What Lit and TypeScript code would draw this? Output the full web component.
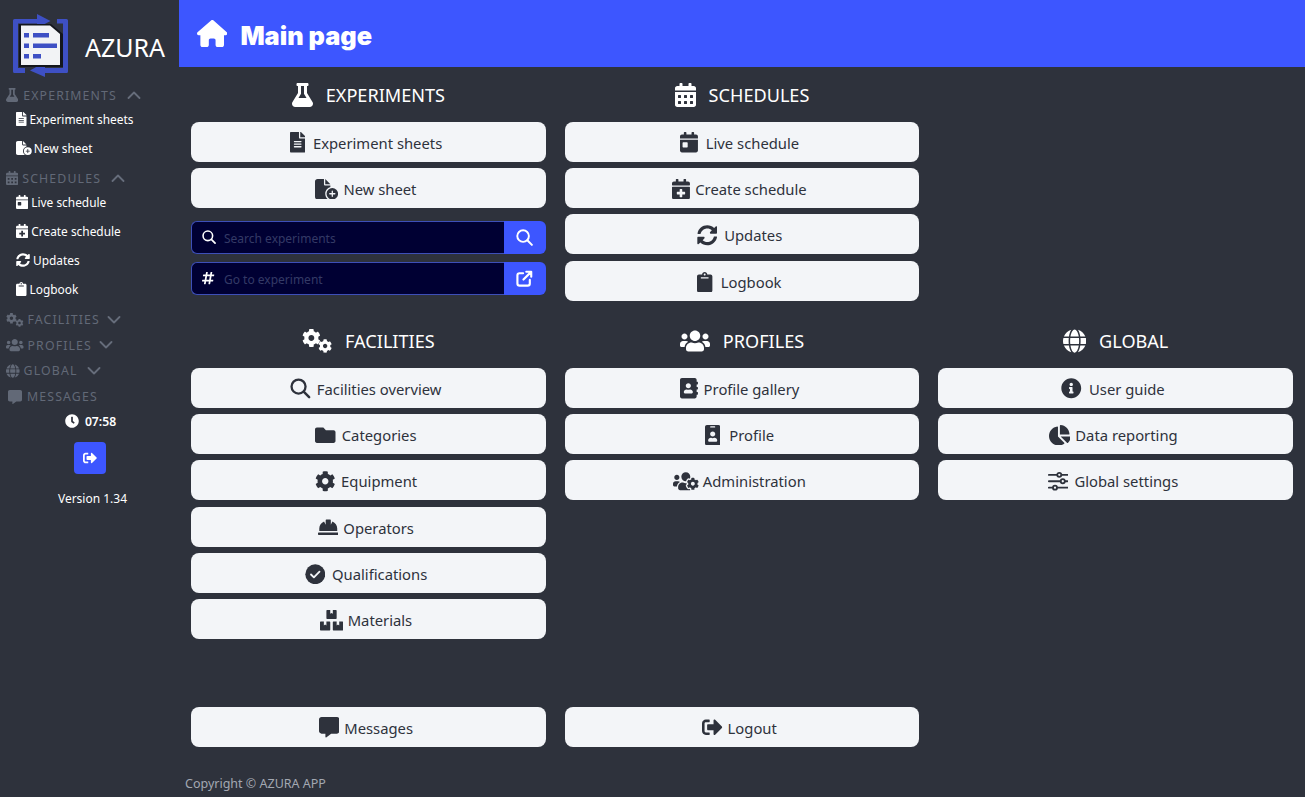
import { LitElement, html, css, svg } from "lit";
import { customElement } from "lit/decorators.js";

type Ic = { vb: string; body: any };
const P = (vb: string, d: string): Ic => ({ vb, body: svg`<path d=${d}/>` });
const cogD = "M487.4 315.7l-42.6-24.6c4.3-23.2 4.3-47 0-70.2l42.6-24.6c4.9-2.8 7.1-8.6 5.5-14-11.1-35.6-30-67.8-54.7-94.6-3.8-4.1-10-5.1-14.8-2.3L380.8 110c-17.9-15.4-38.5-27.3-60.8-35.1V25.8c0-5.6-3.9-10.5-9.4-11.7-36.7-8.2-74.3-7.8-109.2 0-5.5 1.2-9.4 6.1-9.4 11.7V75c-22.2 7.9-42.8 19.8-60.8 35.1L88.7 85.5c-4.9-2.8-11-1.9-14.8 2.3-24.7 26.7-43.6 58.9-54.7 94.6-1.7 5.4.6 11.2 5.5 14L67.3 221c-4.3 23.2-4.3 47 0 70.2l-42.6 24.6c-4.9 2.8-7.1 8.6-5.5 14 11.1 35.6 30 67.8 54.7 94.6 3.8 4.1 10 5.1 14.8 2.3l42.6-24.6c17.9 15.4 38.5 27.3 60.8 35.1v49.2c0 5.6 3.9 10.5 9.4 11.7 36.7 8.2 74.3 7.8 109.2 0 5.5-1.2 9.4-6.1 9.4-11.7v-49.2c22.2-7.9 42.8-19.8 60.8-35.1l42.6 24.6c4.9 2.8 11 1.9 14.8-2.3 24.7-26.7 43.6-58.9 54.7-94.6 1.5-5.5-.7-11.3-5.6-14.1zM256 336c-44.1 0-80-35.9-80-80s35.9-80 80-80 80 35.9 80 80-35.9 80-80 80z";
const icons: Record<string, Ic> = {
  home: P("0 0 576 512", "M575.8 255.5c0 18-15 32.1-32 32.1h-32l.7 160.2c0 2.7-.2 5.4-.5 8.1V472c0 22.1-17.9 40-40 40H456c-1.1 0-2.2 0-3.3-.1c-1.4 .1-2.8 .1-4.2 .1H416 392c-22.1 0-40-17.9-40-40V448 384c0-17.7-14.3-32-32-32H256c-17.7 0-32 14.3-32 32v64 24c0 22.1-17.9 40-40 40H160 128.1c-1.5 0-3-.1-4.5-.2c-1.2 .1-2.4 .2-3.6 .2H104c-22.1 0-40-17.9-40-40V360c0-.9 0-1.900 .1-2.800V287.600H32c-18 0-32-14-32-32.100c0-9 3-17 10-24L266.400 8c7-7 15-8 22-8s15 2 21 7L564.800 231.500c8 7 12 15 11 24z"),
  flask: P("0 0 448 512", "M437.2 403.5L320 215V64h8c13.3 0 24-10.7 24-24V24c0-13.3-10.7-24-24-24H120c-13.3 0-24 10.7-24 24v16c0 13.3 10.7 24 24 24h8v151L10.8 403.5C-18.5 450.6 15.3 512 70.9 512h306.2c55.7 0 89.4-61.5 60.1-108.5zM137.9 320l48.2-77.6c3.7-5.2 5.8-11.6 5.8-18.4V64h64v160c0 6.9 2.2 13.2 5.8 18.4l48.2 77.6h-172z"),
  file: P("0 0 384 512", "M224 136V0H24C10.7 0 0 10.7 0 24v464c0 13.3 10.7 24 24 24h336c13.3 0 24-10.7 24-24V160H248c-13.2 0-24-10.8-24-24zm64 236c0 6.6-5.4 12-12 12H108c-6.6 0-12-5.4-12-12v-8c0-6.6 5.4-12 12-12h168c6.6 0 12 5.4 12 12v8zm0-64c0 6.6-5.4 12-12 12H108c-6.6 0-12-5.4-12-12v-8c0-6.6 5.4-12 12-12h168c6.6 0 12 5.4 12 12v8zm0-72v8c0 6.6-5.4 12-12 12H108c-6.6 0-12-5.4-12-12v-8c0-6.6 5.4-12 12-12h168c6.6 0 12 5.4 12 12zm96-114.1v6.1H256V0h6.1c6.4 0 12.5 2.5 17 7l97.9 98c4.5 4.5 7 10.6 7 16.9z"),
  filePlus: P("0 0 576 512", "M0 64C0 28.7 28.7 0 64 0H224V128c0 17.7 14.3 32 32 32H384v38.6C310.1 219.5 256 287.4 256 368c0 59.1 29.1 111.3 73.8 143.3c-3.2 .5-6.4 .7-9.8 .7H64c-35.3 0-64-28.7-64-64V64zm384 64H256V0L384 128zm48 96a144 144 0 1 1 0 288 144 144 0 1 1 0-288zm16 80c0-8.8-7.2-16-16-16s-16 7.2-16 16v48H368c-8.8 0-16 7.2-16 16s7.2 16 16 16h48v48c0 8.8 7.2 16 16 16s16-7.2 16-16V384h48c8.8 0 16-7.2 16-16s-7.2-16-16-16H448V304z"),
  calendar: P("0 0 448 512", "M0 464c0 26.5 21.5 48 48 48h352c26.5 0 48-21.5 48-48V192H0v272zm320-196c0-6.6 5.4-12 12-12h40c6.6 0 12 5.4 12 12v40c0 6.6-5.4 12-12 12h-40c-6.6 0-12-5.4-12-12v-40zm0 128c0-6.6 5.4-12 12-12h40c6.6 0 12 5.4 12 12v40c0 6.6-5.4 12-12 12h-40c-6.6 0-12-5.4-12-12v-40zM192 268c0-6.6 5.4-12 12-12h40c6.6 0 12 5.4 12 12v40c0 6.6-5.4 12-12 12h-40c-6.6 0-12-5.4-12-12v-40zm0 128c0-6.6 5.4-12 12-12h40c6.6 0 12 5.4 12 12v40c0 6.6-5.4 12-12 12h-40c-6.6 0-12-5.4-12-12v-40zM64 268c0-6.6 5.4-12 12-12h40c6.6 0 12 5.4 12 12v40c0 6.6-5.4 12-12 12H76c-6.6 0-12-5.4-12-12v-40zm0 128c0-6.6 5.4-12 12-12h40c6.6 0 12 5.4 12 12v40c0 6.6-5.4 12-12 12H76c-6.6 0-12-5.4-12-12v-40zM400 64h-48V16c0-8.8-7.2-16-16-16h-32c-8.8 0-16 7.2-16 16v48H160V16c0-8.8-7.2-16-16-16h-32c-8.8 0-16 7.2-16 16v48H48C21.5 64 0 85.5 0 112v48h448v-48c0-26.5-21.5-48-48-48z"),
  calDay: P("0 0 448 512", "M0 464c0 26.5 21.5 48 48 48h352c26.5 0 48-21.5 48-48V192H0v272zm64-192c0-8.8 7.2-16 16-16h96c8.8 0 16 7.2 16 16v96c0 8.8-7.2 16-16 16H80c-8.8 0-16-7.2-16-16v-96zM400 64h-48V16c0-8.8-7.2-16-16-16h-32c-8.8 0-16 7.2-16 16v48H160V16c0-8.8-7.2-16-16-16h-32c-8.8 0-16 7.2-16 16v48H48C21.5 64 0 85.5 0 112v48h448v-48c0-26.5-21.5-48-48-48z"),
  calPlus: P("0 0 448 512", "M436 160H12c-6.6 0-12-5.4-12-12v-36c0-26.5 21.5-48 48-48h48V12c0-6.6 5.4-12 12-12h40c6.6 0 12 5.4 12 12v52h128V12c0-6.6 5.4-12 12-12h40c6.6 0 12 5.4 12 12v52h48c26.5 0 48 21.5 48 48v36c0 6.6-5.4 12-12 12zM12 192h424c6.6 0 12 5.4 12 12v260c0 26.5-21.5 48-48 48H48c-26.5 0-48-21.5-48-48V204c0-6.6 5.4-12 12-12zm316 140c0-6.6-5.4-12-12-12h-60v-60c0-6.6-5.4-12-12-12h-40c-6.6 0-12 5.4-12 12v60h-60c-6.6 0-12 5.4-12 12v40c0 6.6 5.4 12 12 12h60v60c0 6.6 5.4 12 12 12h40c6.6 0 12-5.4 12-12v-60h60c6.6 0 12-5.4 12-12v-40z"),
  sync: P("0 0 512 512", "M370.72 133.28C339.458 104.008 298.888 87.962 255.848 88c-77.458.068-144.328 53.178-162.791 126.85-1.344 5.363-6.122 9.15-11.651 9.15H24.103c-7.498 0-13.194-6.807-11.807-14.176C33.933 94.924 134.813 8 256 8c66.448 0 126.791 26.136 171.315 68.685L463.03 40.97C478.149 25.851 504 36.559 504 57.941V192c0 13.255-10.745 24-24 24H345.941c-21.382 0-32.09-25.851-16.971-40.971l41.75-41.749zM32 296h134.059c21.382 0 32.09 25.851 16.971 40.971l-41.75 41.75c31.262 29.273 71.835 45.319 114.876 45.28 77.418-.07 144.315-53.144 162.787-126.849 1.344-5.363 6.122-9.15 11.651-9.15h57.304c7.498 0 13.194 6.807 11.807 14.176C478.067 417.076 377.187 504 256 504c-66.448 0-126.791-26.136-171.315-68.685L48.97 471.03C33.851 486.149 8 475.441 8 454.059V320c0-13.255 10.745-24 24-24z"),
  clipboard: P("0 0 384 512", "M384 112v352c0 26.51-21.49 48-48 48H48c-26.51 0-48-21.49-48-48V112c0-26.51 21.49-48 48-48h80c0-35.29 28.71-64 64-64s64 28.71 64 64h80c26.51 0 48 21.49 48 48zM192 40c-13.255 0-24 10.745-24 24s10.745 24 24 24 24-10.745 24-24-10.745-24-24-24m96 114v-20a6 6 0 0 0-6-6H102a6 6 0 0 0-6 6v20a6 6 0 0 0 6 6h180a6 6 0 0 0 6-6z"),
  cog: P("0 0 512 512", cogD),
  cogs: { vb: "0 0 640 512", body: svg`<g transform="translate(0 -8) scale(.78)"><path d=${cogD}/></g><g transform="translate(345 215) scale(.58)"><path d=${cogD}/></g>` },
  users: P("0 0 640 512", "M96 224c35.3 0 64-28.7 64-64s-28.7-64-64-64-64 28.7-64 64 28.7 64 64 64zm448 0c35.3 0 64-28.7 64-64s-28.7-64-64-64-64 28.7-64 64 28.7 64 64 64zm32 32h-64c-17.6 0-33.5 7.1-45.1 18.6 40.3 22.1 68.9 62 75.1 109.4h66c17.7 0 32-14.3 32-32v-32c0-35.3-28.7-64-64-64zm-256 0c61.9 0 112-50.1 112-112S381.9 32 320 32 208 82.1 208 144s50.1 112 112 112zm76.8 32h-8.3c-20.8 10-43.9 16-68.5 16s-47.6-6-68.5-16h-8.3C179.6 288 128 339.6 128 403.2V432c0 26.5 21.5 48 48 48h288c26.5 0 48-21.5 48-48v-28.8c0-63.6-51.6-115.2-115.2-115.2zm-223.7-13.4C161.5 263.1 145.6 256 128 256H64c-35.3 0-64 28.7-64 64v32c0 17.7 14.3 32 32 32h65.9c6.3-47.4 34.9-87.3 75.2-109.4z"),
  globe: P("0 0 496 512", "M336.5 160C322 70.7 287.8 8 248 8s-74 62.7-88.5 152h177zM152 256c0 22.2 1.2 43.5 3.3 64h185.3c2.1-20.5 3.3-41.8 3.3-64s-1.2-43.5-3.3-64H155.3c-2.1 20.5-3.3 41.8-3.3 64zm324.7-96c-28.6-67.9-86.5-120.4-158-141.6 24.4 33.8 41.2 84.7 50 141.6h108zM177.2 18.4C105.8 39.6 47.8 92.1 19.3 160h108c8.7-56.9 25.5-107.8 49.9-141.6zM487.4 192H372.7c2.1 21 3.3 42.5 3.3 64s-1.2 43-3.3 64h114.6c5.5-20.5 8.6-41.8 8.6-64s-3.1-43.5-8.5-64zM120 256c0-21.5 1.2-43 3.3-64H8.6C3.2 212.5 0 233.8 0 256s3.2 43.5 8.6 64h114.6c-2-21-3.2-42.5-3.2-64zm39.5 96c14.5 89.3 48.7 152 88.5 152s74-62.7 88.5-152h-177zm159.3 141.6c71.4-21.2 129.4-73.7 158-141.6h-108c-8.8 56.9-25.6 107.8-50 141.6zM19.3 352c28.6 67.9 86.5 120.4 158 141.6-24.4-33.8-41.2-84.7-50-141.6h-108z"),
  comment: P("0 0 512 512", "M448 0H64C28.7 0 0 28.7 0 64v288c0 35.3 28.7 64 64 64h96v84c0 9.8 11.2 15.5 19.1 9.7L304 416h144c35.3 0 64-28.7 64-64V64c0-35.3-28.7-64-64-64z"),
  clock: P("0 0 512 512", "M256,8C119,8,8,119,8,256S119,504,256,504,504,393,504,256,393,8,256,8Zm92.49,313h0l-20,25a16,16,0,0,1-22.49,2.5h0l-67-49.72a40,40,0,0,1-15-31.23V112a16,16,0,0,1,16-16h32a16,16,0,0,1,16,16V256l58,42.5A16,16,0,0,1,348.49,321Z"),
  signout: P("0 0 512 512", "M497 273L329 441c-15 15-41 4.5-41-17v-96H152c-13.3 0-24-10.7-24-24v-96c0-13.3 10.7-24 24-24h136V88c0-21.4 25.9-32 41-17l168 168c9.3 9.4 9.3 24.6 0 34zM192 436v-40c0-6.6-5.4-12-12-12H96c-17.7 0-32-14.3-32-32V160c0-17.7 14.3-32 32-32h84c6.6 0 12-5.4 12-12V76c0-6.6-5.4-12-12-12H96c-53 0-96 43-96 96v192c0 53 43 96 96 96h84c6.6 0 12-5.4 12-12z"),
  search: { vb: "0 0 24 24", body: svg`<circle cx="10" cy="10" r="8.2" fill="none" stroke="currentColor" stroke-width="2.7"/><path d="M16 16l6.4 6.4" fill="none" stroke="currentColor" stroke-width="2.9" stroke-linecap="round"/>` },
  hash: P("0 0 448 512", "M440.667 182.109l7.143-40c1.313-7.355-4.342-14.109-11.813-14.109h-74.81l14.623-81.891C377.123 38.754 371.468 32 363.997 32h-40.632a12 12 0 0 0-11.813 9.891L296.175 128H197.54l14.623-81.891C213.477 38.754 207.822 32 200.35 32h-40.632a12 12 0 0 0-11.813 9.891L132.528 128H53.432a12 12 0 0 0-11.813 9.891l-7.143 40C33.163 185.246 38.818 192 46.289 192h74.81L98.242 320H19.146a12 12 0 0 0-11.813 9.891l-7.143 40C-1.123 377.246 4.532 384 12.003 384h74.81L72.19 465.891C70.877 473.246 76.532 480 84.003 480h40.632a12 12 0 0 0 11.813-9.891L151.826 384h98.634l-14.623 81.891C234.523 473.246 240.178 480 247.65 480h40.632a12 12 0 0 0 11.813-9.891L315.472 384h79.096a12 12 0 0 0 11.813-9.891l7.143-40c1.313-7.355-4.342-14.109-11.813-14.109h-74.81l22.857-128h79.096a12 12 0 0 0 11.813-9.891zM261.889 320h-98.634l22.857-128h98.634l-22.857 128z"),
  ext: { vb: "0 0 24 24", body: svg`<path d="M10 4.500H5a3 3 0 0 0-3 3V19a3 3 0 0 0 3 3h11.500a3 3 0 0 0 3-3v-5" fill="none" stroke="currentColor" stroke-width="3" stroke-linecap="round"/><path d="M10.500 13.500L21 3M14.500 2.500H21.500V9.500" fill="none" stroke="currentColor" stroke-width="3" stroke-linecap="round" stroke-linejoin="round"/>` },
  folder: P("0 0 512 512", "M464 128H272l-64-64H48C21.49 64 0 85.49 0 112v288c0 26.51 21.49 48 48 48h416c26.51 0 48-21.49 48-48V176c0-26.51-21.49-48-48-48z"),
  hat: P("0 0 512 512", "M480 288c0-80.25-49.28-148.92-119.19-177.62L320 192V80a16 16 0 0 0-16-16h-96a16 16 0 0 0-16 16v112l-40.81-81.62C81.28 139.08 32 207.75 32 288v64h448zm16 96H16a16 16 0 0 0-16 16v32a16 16 0 0 0 16 16h480a16 16 0 0 0 16-16v-32a16 16 0 0 0-16-16z"),
  check: { vb: "0 0 512 512", body: svg`<circle cx="256" cy="256" r="248"/><path d="M150 262l72 72 140-144" fill="none" stroke="#f3f5f8" stroke-width="46" stroke-linecap="round" stroke-linejoin="round"/>` },
  boxes: P("0 0 576 512", "M560 288h-80v96l-32-21.3-32 21.3v-96h-80c-8.8 0-16 7.2-16 16v192c0 8.8 7.2 16 16 16h224c8.8 0 16-7.2 16-16V304c0-8.8-7.2-16-16-16zm-384-64h224c8.8 0 16-7.2 16-16V16c0-8.8-7.2-16-16-16h-80v96l-32-21.3L256 96V0h-80c-8.8 0-16 7.2-16 16v192c0 8.8 7.2 16 16 16zm64 64h-80v96l-32-21.3L96 384v-96H16c-8.8 0-16 7.2-16 16v192c0 8.8 7.2 16 16 16h224c8.8 0 16-7.2 16-16V304c0-8.8-7.2-16-16-16z"),
  book: P("0 0 448 512", "M436 160c6.6 0 12-5.4 12-12v-40c0-6.6-5.4-12-12-12h-20V48c0-26.5-21.5-48-48-48H48C21.5 0 0 21.5 0 48v416c0 26.5 21.5 48 48 48h320c26.5 0 48-21.5 48-48v-48h20c6.6 0 12-5.4 12-12v-40c0-6.6-5.4-12-12-12h-20v-64h20c6.6 0 12-5.4 12-12v-40c0-6.6-5.4-12-12-12h-20v-64h20zm-228-32c35.3 0 64 28.7 64 64s-28.7 64-64 64-64-28.7-64-64 28.7-64 64-64zm112 236.8c0 10.6-10 19.2-22.4 19.2H118.4C106 384 96 375.4 96 364.8v-19.2c0-31.8 30.1-57.6 67.2-57.6h5c12.3 5.1 25.7 8 39.8 8s27.6-2.9 39.8-8h5c37.1 0 67.2 25.8 67.2 57.6v19.2z"),
  badge: P("0 0 384 512", "M336 0H48C21.5 0 0 21.5 0 48v416c0 26.5 21.5 48 48 48h288c26.5 0 48-21.5 48-48V48c0-26.5-21.5-48-48-48zM144 32h96c8.8 0 16 7.2 16 16s-7.2 16-16 16h-96c-8.8 0-16-7.2-16-16s7.2-16 16-16zm48 128c35.3 0 64 28.7 64 64s-28.7 64-64 64-64-28.7-64-64 28.7-64 64-64zm112 236.8c0 10.6-10 19.2-22.4 19.2H102.4C90 416 80 407.4 80 396.8v-19.2c0-31.8 30.1-57.6 67.2-57.6h5c12.3 5.1 25.7 8 39.8 8s27.6-2.9 39.8-8h5c37.1 0 67.2 25.8 67.2 57.6v19.2z"),
  usersCog: P("0 0 640 512", "M610.5 341.3c2.6-14.1 2.6-28.5 0-42.6l25.8-14.9c3-1.7 4.3-5.2 3.3-8.5-6.7-21.6-18.2-41.2-33.2-57.4-2.3-2.5-6-3.1-9-1.4l-25.8 14.9c-10.9-9.3-23.4-16.5-36.9-21.3v-29.8c0-3.4-2.4-6.4-5.7-7.1-22.3-5-45-4.8-66.2 0-3.3.7-5.7 3.7-5.7 7.1v29.8c-13.5 4.8-26 12-36.9 21.3l-25.8-14.9c-2.9-1.7-6.7-1.1-9 1.4-15 16.2-26.5 35.8-33.2 57.4-1 3.3.4 6.8 3.3 8.5l25.8 14.9c-2.6 14.1-2.6 28.5 0 42.6l-25.8 14.9c-3 1.7-4.3 5.2-3.3 8.5 6.7 21.6 18.2 41.1 33.2 57.4 2.3 2.5 6 3.1 9 1.4l25.8-14.9c10.9 9.3 23.4 16.5 36.9 21.3v29.8c0 3.4 2.4 6.4 5.7 7.1 22.3 5 45 4.8 66.2 0 3.3-.7 5.7-3.7 5.7-7.1v-29.8c13.5-4.8 26-12 36.9-21.3l25.8 14.9c2.9 1.7 6.7 1.1 9-1.4 15-16.2 26.5-35.8 33.2-57.4 1-3.3-.4-6.8-3.3-8.5l-25.8-14.9zM496 368.5c-26.8 0-48.5-21.8-48.5-48.5s21.8-48.5 48.5-48.5 48.5 21.8 48.5 48.5-21.7 48.5-48.5 48.5zM96 224c35.3 0 64-28.7 64-64s-28.7-64-64-64-64 28.7-64 64 28.7 64 64 64zm224 32c1.9 0 3.7-.5 5.6-.6 8.3-21.7 20.5-42.1 36.3-59.2 7.4-8 17.9-12.6 28.9-12.6 6.9 0 13.7 1.8 19.6 5.3l7.9 4.6c.8-.5 1.6-.9 2.4-1.4 7-14.6 11.2-30.8 11.2-48 0-61.9-50.1-112-112-112S208 82.1 208 144c0 61.9 50.1 112 112 112zm105.2 194.5c-2.3-1.2-4.6-2.6-6.8-3.9-8.2 4.8-15.3 9.8-27.5 9.8-10.9 0-21.4-4.6-28.9-12.6-18.3-19.8-32.3-43.9-40.2-69.6-10.7-34.5 24.9-49.7 25.8-50.3-.1-2.6-.1-5.2 0-7.8l-7.9-4.6c-3.8-2.2-7-5-9.8-8.1-3.3.2-6.5.6-9.8.6-24.6 0-47.6-6-68.5-16h-8.3C179.6 288 128 339.6 128 403.2V432c0 26.5 21.5 48 48 48h255.4c-3.7-6-6.2-12.8-6.2-20.3v-9.2zM173.1 274.6C161.5 263.1 145.6 256 128 256H64c-35.3 0-64 28.7-64 64v32c0 17.7 14.3 32 32 32h65.9c6.3-47.4 34.9-87.3 75.2-109.4z"),
  info: P("0 0 512 512", "M256 8C119.043 8 8 119.083 8 256c0 136.997 111.043 248 248 248s248-111.003 248-248C504 119.083 392.957 8 256 8zm0 110c23.196 0 42 18.804 42 42s-18.804 42-42 42-42-18.804-42-42 18.804-42 42-42zm56 254c0 6.627-5.373 12-12 12h-88c-6.627 0-12-5.373-12-12v-24c0-6.627 5.373-12 12-12h12v-64h-12c-6.627 0-12-5.373-12-12v-24c0-6.627 5.373-12 12-12h64c6.627 0 12 5.373 12 12v100h12c6.627 0 12 5.373 12 12v24z"),
  pie: P("0 0 544 512", "M527.79 288H290.5l158.03 158.03c6.04 6.04 15.98 6.53 22.19.68 38.7-36.46 65.32-85.61 73.13-140.86 1.34-9.46-6.51-17.85-16.06-17.85zm-15.83-64.8C503.72 103.74 408.26 8.28 288.8.04 279.68-.59 272 7.1 272 16.24V240h223.77c9.14 0 16.82-7.68 16.19-16.8zM224 288V50.71c0-9.55-8.39-17.4-17.84-16.06C86.99 51.49-4.1 155.6.14 280.37 4.5 408.51 114.83 513.59 243.03 511.98c50.4-.63 96.97-16.87 135.26-44.03 7.9-5.6 8.42-17.23 1.57-24.08L224 288z"),
  sliders: { vb: "0 0 24 24", body: svg`<g fill="none" stroke="currentColor" stroke-width="2.100" stroke-linecap="round"><path d="M1 4.500h9.500M16 4.500h7M1 12h13.500M20 12h3M1 19.500h4.500M11 19.500h12"/><circle cx="13.200" cy="4.500" r="2.400"/><circle cx="17.300" cy="12" r="2.400"/><circle cx="8.200" cy="19.500" r="2.400"/></g>` },
  chevUp: { vb: "0 0 14 8", body: svg`<path d="M1.500 7L7 1.500 12.500 7" fill="none" stroke="currentColor" stroke-width="1.800" stroke-linecap="round" stroke-linejoin="round"/>` },
  chevDown: { vb: "0 0 14 8", body: svg`<path d="M1.500 1L7 6.500 12.500 1" fill="none" stroke="currentColor" stroke-width="1.800" stroke-linecap="round" stroke-linejoin="round"/>` },
};

const ic = (name: string, cls = "") => {
  const i = icons[name];
  return html`<svg class="ic ${cls}" viewBox=${i.vb} fill="currentColor" aria-hidden="true">${i.body}</svg>`;
};

const logo = html`<svg class="logo" viewBox="0 0 56 64" aria-hidden="true">
  <g fill="#3e50c4">
    <path d="M1.500 5H25V9.500H5V54H12V59H1.500A1.500 1.500 0 0 1 0 57.500V6.500A1.500 1.500 0 0 1 1.500 5z"/>
    <path d="M24 0L37.500 7 24 14z"/>
    <path d="M44 5H53.500A1.500 1.500 0 0 1 55 6.500V57.500A1.500 1.500 0 0 1 53.500 59H31V54H50V9.500H44z"/>
    <path d="M32 48L17 56.500 32 63z"/>
  </g>
  <path d="M6 10H38L50 20V53H6z" fill="#14161c"/>
  <path d="M8 11.500H37L47 20V51H8z" fill="#f2f3f5"/>
  <g fill="#3e50c4">
    <rect x="11" y="19" width="5" height="4.500"/><rect x="20" y="19" width="16" height="4.500"/>
    <rect x="11" y="29.500" width="5" height="4.500"/><rect x="20" y="29.500" width="24" height="4.500"/>
    <rect x="11" y="40" width="5" height="4.500"/><rect x="20" y="40" width="8" height="4.500"/>
  </g>
</svg>`;

type Btn = { i: string; t: string; g: number };
const nav: { i: string; t: string; open: boolean; cg: number; g: number; sub: Btn[]; noChev?: boolean; cls?: string }[] = [
  { i: "flask", t: "EXPERIMENTS", open: true, cg: 10, g: 5, sub: [{ i: "file", t: "Experiment sheets", g: 3 }, { i: "filePlus", t: "New sheet", g: 2 }] },
  { i: "calendar", t: "SCHEDULES", open: true, cg: 10, g: 4, sub: [{ i: "calDay", t: "Live schedule", g: 3 }, { i: "calPlus", t: "Create schedule", g: 3 }, { i: "sync", t: "Updates", g: 3 }, { i: "clipboard", t: "Logbook", g: 3 }] },
  { i: "cogs", t: "FACILITIES", open: false, cg: 7, g: 4, sub: [] },
  { i: "users", t: "PROFILES", open: false, cg: 7, g: 4, sub: [] },
  { i: "globe", t: "GLOBAL", open: false, cg: 9, g: 4, sub: [] },
  { i: "comment", t: "MESSAGES", open: false, cg: 0, g: 5, sub: [], noChev: true, cls: "msg" },
];

const top1: Btn[] = [{ i: "file", t: "Experiment sheets", g: 8 }, { i: "filePlus", t: "New sheet", g: 5 }];
const sched: Btn[] = [{ i: "calDay", t: "Live schedule", g: 8 }, { i: "calPlus", t: "Create schedule", g: 5 }, { i: "sync", t: "Updates", g: 7 }, { i: "clipboard", t: "Logbook", g: 8 }];
const fac: Btn[] = [{ i: "search", t: "Facilities overview", g: 6 }, { i: "folder", t: "Categories", g: 6 }, { i: "cog", t: "Equipment", g: 6 }, { i: "hat", t: "Operators", g: 5 }, { i: "check", t: "Qualifications", g: 7 }, { i: "boxes", t: "Materials", g: 5 }];
const prof: Btn[] = [{ i: "book", t: "Profile gallery", g: 6 }, { i: "badge", t: "Profile", g: 9 }, { i: "usersCog", t: "Administration", g: 4 }];
const glob: Btn[] = [{ i: "info", t: "User guide", g: 7 }, { i: "pie", t: "Data reporting", g: 5 }, { i: "sliders", t: "Global settings", g: 6 }];

@customElement("app-root")
export class AppRoot extends LitElement {
  static styles = css`
    :host {
      display: flex;
      width: 1305px;
      height: 797px;
      overflow: hidden;
      background: #2e323c;
      font-family: "Noto Sans", "Open Sans", sans-serif;
      color: #fff;
    }
    * { box-sizing: border-box; }
    .ic { flex: none; display: block; height: 20.500px; width: auto; }
    .side { flex: none; width: 179px; display: flex; flex-direction: column; }
    .brand { height: 82px; display: flex; align-items: flex-start; padding: 14px 0 0 13px; gap: 16px; }
    .logo { width: 56px; height: 64px; flex: none; }
    .brand-name { font-size: 25px; line-height: 66px; color: #fff; }
    .nav-h {
      height: 25.700px;
      display: flex;
      align-items: center;
      padding: 1px 0 0 6px;
      color: #626977;
      font-size: 12.300px;
      letter-spacing: 1.150px;
    }
    .nav-h .ic { height: 14px; }
    .nav-h.msg { padding-left: 8px; }
    .nav-h .chev { height: 8px; color: #666d7b; }
    .sub { margin: -3px 0 2.400px; }
    .sub-i { height: 29px; display: flex; align-items: center; padding-left: 16px; font-size: 11.900px; color: #fff; }
    .sub-i .ic { height: 14px; }
    .clock { height: 24px; display: flex; align-items: center; justify-content: center; gap: 6px; font-size: 12.200px; font-weight: 600; padding: 1px 0 0 2px; }
    .clock .ic { height: 14px; }
    .out-w { display: flex; justify-content: center; margin-top: 9px; padding-left: 1px; }
    .out { width: 32px; height: 32px; border: 0; border-radius: 4px; background: #3d56ff; color: #fff; display: flex; align-items: center; justify-content: center; }
    .out .ic { height: 14px; }
    .ver { text-align: center; font-size: 12px; margin-top: 16px; line-height: 18px; padding-left: 6px; }
    .main { flex: 1; min-width: 0; display: flex; flex-direction: column; }
    .top { height: 67px; background: #3d56ff; display: flex; align-items: center; gap: 13px; padding: 0 0 0 18px; }
    .top .ic { height: 27px; color: #fff; }
    .top h1 { margin: 0; padding-top: 4px; font-size: 25.300px; font-weight: 900; font-family: Inter, "Noto Sans", sans-serif; color: #fff; }
    .grid { display: grid; grid-template-columns: repeat(3, 1fr); column-gap: 18.800px; padding: 8px 12px 0; row-gap: 20.200px; }
    .col { display: flex; flex-direction: column; gap: 6.400px; min-width: 0; }
    .head { height: 40px; margin-bottom: .2px; display: flex; align-items: center; justify-content: center; gap: 13px; font-size: 18.100px; color: #fff; }
    .head .ic { height: 24px; }
    .btn {
      height: 40px; width: 100%; border: 0; border-radius: 8px; background: #f3f5f8; color: #2e323c; padding: 2px 5px 0 0;
      display: flex; align-items: center; justify-content: center; font: inherit; font-size: 14.800px;
    }
    .group { display: flex; height: 33px; }
    .g1 { margin-top: 6.600px; }
    .g2 { margin-top: 1.600px; }
    .g-main { flex: 1; display: flex; border: 1px solid #3d4fb8; border-right: 0; border-radius: 6px 0 0 6px; background: #000033; min-width: 0; }
    .g-ic { width: 32px; flex: none; display: flex; align-items: center; justify-content: center; color: #fff; padding-left: 1px; }
    .g-ic .ic { height: 14px; }
    .g-txt { flex: 1; display: flex; align-items: center; font-size: 12px; color: #343a66; padding-top: 2px; }
    .g-btn { width: 42px; flex: none; background: #3d56ff; color: #fff; display: flex; align-items: center; justify-content: center; border-radius: 0 6px 6px 0; }
    .g-btn .ic { height: 17px; }
    .bottom { display: grid; grid-template-columns: repeat(3, 1fr); column-gap: 18.800px; padding: 67.200px 12px 0; }
    .copy { font-size: 12.500px; color: #a3a8b2; padding: 28.500px 0 0 6px; line-height: 18px; }
  `;

  private btn(b: Btn) {
    return html`<button class="btn">${ic(b.i)}<span style="margin-left:${b.g}px">${b.t}</span></button>`;
  }

  render() {
    return html`
      <aside class="side">
        <div class="brand">${logo}<span class="brand-name">AZURA</span></div>
        ${nav.map(
          (n) => html`
            <div class="nav-h ${n.cls ?? ""}">
              ${ic(n.i)}<span style="margin-left:${n.g}px">${n.t}</span>
              ${n.noChev ? "" : html`<span style="margin-left:${n.cg}px">${ic(n.open ? "chevUp" : "chevDown", "chev")}</span>`}
            </div>
            ${n.sub.length
              ? html`<div class="sub">
                  ${n.sub.map((s) => html`<div class="sub-i">${ic(s.i)}<span style="margin-left:${s.g}px">${s.t}</span></div>`)}
                </div>`
              : ""}
          `
        )}
        <div class="clock">${ic("clock")}<span>07:58</span></div>
        <div class="out-w"><button class="out">${ic("signout")}</button></div>
        <div class="ver">Version 1.34</div>
      </aside>
      <main class="main">
        <header class="top">${ic("home")}<h1>Main page</h1></header>
        <section class="grid">
          <div class="col">
            <div class="head">${ic("flask")}<span>EXPERIMENTS</span></div>
            ${top1.map((b) => this.btn(b))}
            <div class="group g1">
              <div class="g-main"><span class="g-ic">${ic("search")}</span><span class="g-txt">Search experiments</span></div>
              <span class="g-btn">${ic("search")}</span>
            </div>
            <div class="group g2">
              <div class="g-main"><span class="g-ic">${ic("hash")}</span><span class="g-txt">Go to experiment</span></div>
              <span class="g-btn">${ic("ext")}</span>
            </div>
          </div>
          <div class="col">
            <div class="head">${ic("calendar")}<span>SCHEDULES</span></div>
            ${sched.map((b) => this.btn(b))}
          </div>
          <div class="col"></div>
          <div class="col">
            <div class="head">${ic("cogs")}<span>FACILITIES</span></div>
            ${fac.map((b) => this.btn(b))}
          </div>
          <div class="col">
            <div class="head">${ic("users")}<span>PROFILES</span></div>
            ${prof.map((b) => this.btn(b))}
          </div>
          <div class="col">
            <div class="head">${ic("globe")}<span>GLOBAL</span></div>
            ${glob.map((b) => this.btn(b))}
          </div>
        </section>
        <section class="bottom">
          ${this.btn({ i: "comment", t: "Messages", g: 5 })}
          ${this.btn({ i: "signout", t: "Logout", g: 5 })}
        </section>
        <footer class="copy">Copyright © AZURA APP</footer>
      </main>
    `;
  }
}
